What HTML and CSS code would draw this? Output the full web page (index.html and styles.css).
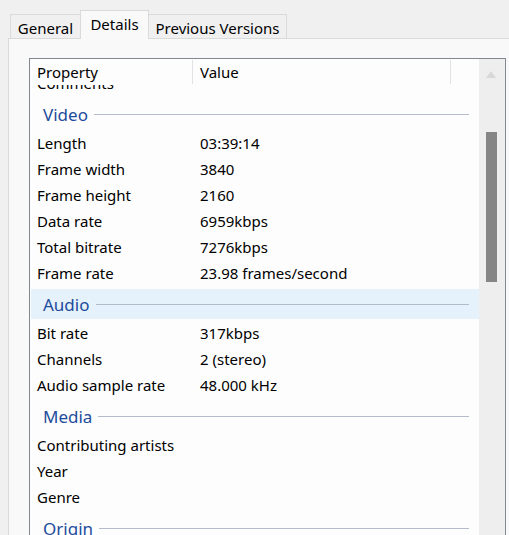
FILE: index.html
```html
<!DOCTYPE html>
<html>
<head>
<meta charset="utf-8">
<link rel="stylesheet" href="styles.css">
</head>
<body>
<div class="tabs">
  <div class="tab tab-general">General</div>
  <div class="tab tab-details active">Details</div>
  <div class="tab tab-prev">Previous Versions</div>
</div>
<div class="panel">
  <div class="listbox">
    <div class="main">
      <div class="header">
        <div class="hcell hprop">Property</div>
        <div class="hcell hval">Value</div>
        <div class="hcell hrest"></div>
      </div>
      <div class="body">
        <div class="row first"><span>Comments</span><span></span></div>
        <div class="group"><div class="group-inner"><span class="gtitle">Video</span><span class="gline"></span></div></div>
        <div class="row"><span>Length</span><span>03:39:14</span></div>
        <div class="row"><span>Frame width</span><span>3840</span></div>
        <div class="row"><span>Frame height</span><span>2160</span></div>
        <div class="row"><span>Data rate</span><span>6959kbps</span></div>
        <div class="row"><span>Total bitrate</span><span>7276kbps</span></div>
        <div class="row"><span>Frame rate</span><span>23.98 frames/second</span></div>
        <div class="group"><div class="group-inner hover"><span class="gtitle">Audio</span><span class="gline"></span></div></div>
        <div class="row"><span>Bit rate</span><span>317kbps</span></div>
        <div class="row"><span>Channels</span><span>2 (stereo)</span></div>
        <div class="row"><span>Audio sample rate</span><span>48.000 kHz</span></div>
        <div class="group"><div class="group-inner"><span class="gtitle">Media</span><span class="gline"></span></div></div>
        <div class="row"><span>Contributing artists</span><span></span></div>
        <div class="row"><span>Year</span><span></span></div>
        <div class="row"><span>Genre</span><span></span></div>
        <div class="group"><div class="group-inner"><span class="gtitle">Origin</span><span class="gline"></span></div></div>
        <div class="row"><span>Directors</span><span></span></div>
      </div>
    </div>
    <div class="scrollbar">
      <div class="arrow"></div>
      <div class="thumb"></div>
    </div>
  </div>
</div>
</body>
</html>
```
FILE: styles.css
```css
html, body {
  margin: 0;
  padding: 0;
  height: 535px;
  overflow: hidden;
  background: #f0f0f0;
  font-family: "Noto Sans", "Open Sans", sans-serif;
  font-size: 15px;
  color: #000;
}

.tabs {
  display: flex;
  align-items: flex-end;
  height: 38px;
  padding-left: 10px;
  box-sizing: border-box;
}

.tab {
  box-sizing: border-box;
  height: 24px;
  border: 1px solid #dadada;
  border-bottom: 0;
  display: flex;
  align-items: center;
  justify-content: center;
  padding-top: 2px;
  background: #f0f0f0;
}

.tab-general { width: 70px; border-right: 0; }
.tab-details { width: 69px; }
.tab-prev { width: 138px; border-left: 0; }

.tab.active {
  height: 29px;
  margin-bottom: -1px;
  background: #f9f9f9;
  padding-top: 0;
  padding-bottom: 2px;
  position: relative;
  z-index: 1;
}

.panel {
  margin-left: 8px;
  height: 520px;
  background: #f9f9f9;
  border-top: 1px solid #dadada;
  border-left: 1px solid #dadada;
  padding: 19px 0 0 20px;
  box-sizing: border-box;
}

.listbox {
  width: 477px;
  height: 500px;
  box-sizing: border-box;
  border: 1px solid #828790;
  border-bottom: 0;
  background: #fdfdfd;
  display: flex;
}

.main {
  width: 449px;
  display: flex;
  flex-direction: column;
}

.header {
  height: 26px;
  display: flex;
  align-items: stretch;
  background: #fdfdfd;
}

.hcell {
  display: flex;
  align-items: center;
  padding-left: 7px;
  box-sizing: border-box;
}

.hprop { width: 163px; border-right: 1px solid #e2e2e2; margin: 1px 0; }
.hval { width: 258px; border-right: 1px solid #e2e2e2; margin: 1px 0; }
.hrest { flex: 1; }

.body {
  flex: 1;
  overflow: hidden;
}

.row {
  height: 26px;
  display: grid;
  grid-template-columns: 163px 1fr;
  align-items: center;
  padding-left: 7px;
  padding-bottom: 1px;
  box-sizing: border-box;
  white-space: nowrap;
}

.row.first { margin-top: -15px; }

.group {
  height: 34px;
  padding: 3px 0 1px 1px;
  box-sizing: border-box;
}

.group-inner {
  height: 30px;
  display: flex;
  align-items: center;
  padding-left: 12px;
}

.group-inner.hover { background: #e5f1fb; }

.gtitle {
  color: #1d4c9c;
  font-size: 17px;
}

.gline {
  flex: 1;
  height: 1px;
  background: #b4bccb;
  margin-left: 6px;
  margin-right: 10px;
  margin-top: 1px;
}

.scrollbar {
  width: 26px;
  background: #eeeeee;
  display: flex;
  flex-direction: column;
  align-items: flex-start;
}

.arrow {
  margin-top: 12px;
  margin-left: 7px;
  width: 0;
  height: 0;
  border-left: 5px solid transparent;
  border-right: 5px solid transparent;
  border-bottom: 7px solid #d8d8d8;
}

.thumb {
  margin-top: 54px;
  margin-left: 7px;
  width: 11px;
  height: 150px;
  background: #858585;
}
```
